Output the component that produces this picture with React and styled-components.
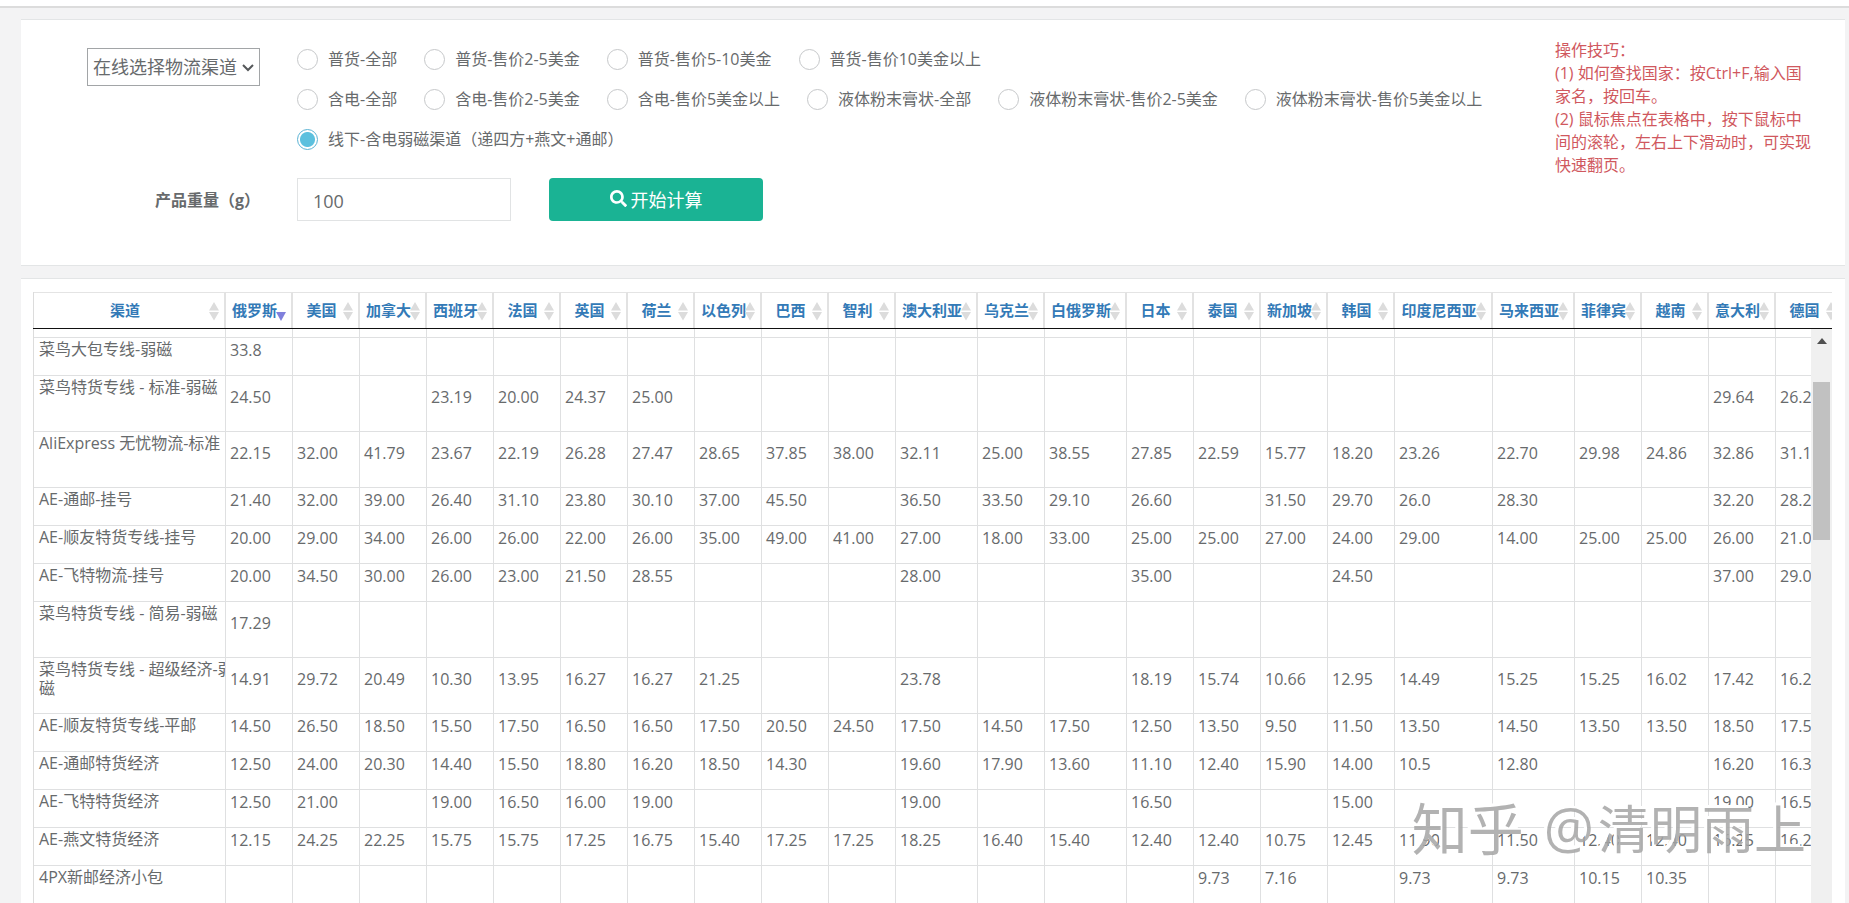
import React, { useState } from "react";
import styled, { createGlobalStyle } from "styled-components";
import { FaSearch } from "react-icons/fa";

const GlobalStyle = createGlobalStyle`
  *, *::before, *::after { box-sizing: border-box; }
  html, body { height: 100%; margin: 0; }
  body {
    overflow: hidden;
    background: #f3f3f4;
    color: #676a6c;
    font: 16px/24px "Open Sans", "Noto Sans CJK SC", sans-serif;
  }
  button, input, select { font-family: inherit; color: inherit; }
`;

const Page = styled.div`
  position: relative;
  height: 100vh;
  display: flex;
  flex-direction: column;
  overflow: hidden;
`;

const TopBar = styled.header`
  flex: none;
  height: 8px;
  background: #fff;
  border-bottom: 2px solid #dcdcdc;
`;

const Main = styled.main`
  flex: 1;
  min-height: 0;
  display: flex;
  flex-direction: column;
  gap: 12px;
  padding: 11px 4px 0 21px;
`;

const FilterPanel = styled.form`
  flex: none;
  display: grid;
  grid-template-columns: 239px minmax(0, 1fr) 258px;
  column-gap: 37px;
  row-gap: 19px;
  padding: 19px 32px 44px 0;
  background: #fff;
  border: solid #e3e5e6;
  border-width: 1px 0;
`;

const LabelCell = styled.div`
  display: flex;
  justify-content: flex-end;
  align-items: ${(p) => (p.$top ? "flex-start" : "center")};
  padding-top: ${(p) => (p.$top ? "9px" : "0")};
`;

const SelectBox = styled.div`
  position: relative;
  width: 173px;
  svg {
    position: absolute;
    right: 6px;
    top: 16px;
    pointer-events: none;
  }
`;

const Select = styled.select`
  appearance: none;
  width: 100%;
  height: 38px;
  padding: 0 22px 0 5px;
  border: 1px solid #a2a5a7;
  border-radius: 0;
  background: #fff;
  font-size: 18px;
`;

const RadioRows = styled.div`
  display: flex;
  flex-direction: column;
`;

const RadioRow = styled.div`
  display: flex;
  flex-wrap: wrap;
  column-gap: 27px;
`;

const RadioLabel = styled.label`
  display: flex;
  align-items: center;
  gap: 10px;
  height: 40px;
  white-space: nowrap;
`;

const Radio = styled.input`
  appearance: none;
  width: 21px;
  height: 21px;
  margin: 0;
  border: 1px solid #c6c8ca;
  border-radius: 50%;
  background: #fff;
  &:checked {
    border-color: #5bb3d4;
    background: radial-gradient(circle, #5bc0de 7px, #fff 8px);
  }
`;

const WeightLabel = styled.label`
  font-weight: 700;
`;

const WeightRow = styled.div`
  display: flex;
  gap: 38px;
`;

const WeightInput = styled.input`
  width: 214px;
  height: 43px;
  padding: 2px 15px 0;
  border: 1px solid #e1e3e4;
  background: #fff;
  font-size: 18px;
`;

const SubmitButton = styled.button`
  display: flex;
  align-items: center;
  justify-content: center;
  gap: 4px;
  width: 214px;
  height: 43px;
  padding: 0 6px 2px;
  border: 0;
  border-radius: 4px;
  background: #1ab394;
  color: #fff;
  font-size: 18px;
`;

const Tips = styled.div`
  grid-column: 3;
  grid-row: 1 / span 2;
  color: #d0585e;
  line-height: 23px;
  p { margin: 0; }
`;

const TablePanel = styled.section`
  flex: 1;
  min-height: 0;
  display: flex;
  flex-direction: column;
  padding: 13px 13px 0 12px;
  background: #fff;
  border-top: 1px solid #e3e5e6;
`;

const HeadClip = styled.div`
  flex: none;
  overflow: hidden;
  border-bottom: 1px solid #111;
`;

const BodyArea = styled.div`
  flex: 1;
  min-height: 0;
  display: flex;
`;

const BodyClip = styled.div`
  flex: 1;
  min-width: 0;
  overflow: hidden;
`;

const Table = styled.table`
  width: ${(p) => p.$width}px;
  table-layout: fixed;
  border-collapse: separate;
  border-spacing: 0;
  border-left: 1px solid #dcdcdc;
`;

const HeadCell = styled.th`
  height: 36px;
  padding: 0;
  border-top: 1px solid #e4e4e4;
  border-right: 2px solid #e2e2e2;
`;

const SortButton = styled.button`
  position: relative;
  display: block;
  width: 100%;
  height: 35px;
  padding: 0 14px 2px 6px;
  border: 0;
  background: transparent;
  color: #337ab7;
  font-size: 15px;
  font-weight: 700;
  line-height: 24px;
  white-space: nowrap;
  text-align: center;
  svg {
    position: absolute;
    right: 5px;
    top: 9px;
  }
`;

const Row = styled.tr`
  height: ${(p) => (p.$size === "tall" ? 56 : p.$size === "cut" ? 9 : 38)}px;
`;

const NameCell = styled.th`
  padding: 2px 0 0 5px;
  border: solid #dfe0e1;
  border-width: 0 1px 1px 0;
  font-weight: 400;
  line-height: 19px;
  text-align: left;
  vertical-align: top;
  overflow: hidden;
`;

const NameText = styled.div`
  width: 200px;
`;

const PriceCell = styled.td`
  padding: 0 0 ${(p) => (p.$cut ? 0 : 14)}px 4px;
  border: solid #dfe0e1;
  border-width: 0 1px 1px 0;
  line-height: 20px;
  vertical-align: middle;
  white-space: nowrap;
`;

const ScrollTrack = styled.div`
  flex: none;
  display: flex;
  flex-direction: column;
  align-items: center;
  width: 21px;
  padding-top: 9px;
  background: #f0f0f0;
`;

const ScrollThumb = styled.div`
  width: 17px;
  height: 158px;
  margin-top: 38px;
  background: #c1c1c1;
`;

const Watermark = styled.div`
  position: absolute;
  right: 43px;
  bottom: 38px;
  display: flex;
  align-items: center;
  gap: 20px;
  color: rgba(164, 164, 164, 0.85);
  font-size: 52px;
  line-height: 72px;
  text-shadow: -3px -3px 0 #fff;
  white-space: nowrap;
  pointer-events: none;
`;

const Brand = styled.span`
  font-size: 56px;
`;

const AtSign = styled.span`
  margin-right: 4px;
  font-size: 56px;
`;

const OPTION_ROWS = [
  ["普货-全部", "普货-售价2-5美金", "普货-售价5-10美金", "普货-售价10美金以上"],
  [
    "含电-全部",
    "含电-售价2-5美金",
    "含电-售价5美金以上",
    "液体粉末膏状-全部",
    "液体粉末膏状-售价2-5美金",
    "液体粉末膏状-售价5美金以上",
  ],
  ["线下-含电弱磁渠道（递四方+燕文+通邮）"],
];

const COUNTRIES = [
  "俄罗斯", "美国", "加拿大", "西班牙", "法国", "英国", "荷兰", "以色列",
  "巴西", "智利", "澳大利亚", "乌克兰", "白俄罗斯", "日本", "泰国", "新加坡",
  "韩国", "印度尼西亚", "马来西亚", "菲律宾", "越南", "意大利", "德国",
];

// Prices follow the order of COUNTRIES; "-" stands for a route that is not offered.
const ROWS = [
  { name: "", size: "cut", prices: "" },
  { name: "菜鸟大包专线-弱磁", prices: "33.8" },
  { name: "菜鸟特货专线 - 标准-弱磁", size: "tall", prices: "24.50 - - 23.19 20.00 24.37 25.00 - - - - - - - - - - - - - - 29.64 26.20" },
  { name: "AliExpress 无忧物流-标准", size: "tall", prices: "22.15 32.00 41.79 23.67 22.19 26.28 27.47 28.65 37.85 38.00 32.11 25.00 38.55 27.85 22.59 15.77 18.20 23.26 22.70 29.98 24.86 32.86 31.10" },
  { name: "AE-通邮-挂号", prices: "21.40 32.00 39.00 26.40 31.10 23.80 30.10 37.00 45.50 - 36.50 33.50 29.10 26.60 - 31.50 29.70 26.0 28.30 - - 32.20 28.20" },
  { name: "AE-顺友特货专线-挂号", prices: "20.00 29.00 34.00 26.00 26.00 22.00 26.00 35.00 49.00 41.00 27.00 18.00 33.00 25.00 25.00 27.00 24.00 29.00 14.00 25.00 25.00 26.00 21.00" },
  { name: "AE-飞特物流-挂号", prices: "20.00 34.50 30.00 26.00 23.00 21.50 28.55 - - - 28.00 - - 35.00 - - 24.50 - - - - 37.00 29.00" },
  { name: "菜鸟特货专线 - 简易-弱磁", size: "tall", prices: "17.29" },
  { name: "菜鸟特货专线 - 超级经济-弱磁", size: "tall", prices: "14.91 29.72 20.49 10.30 13.95 16.27 16.27 21.25 - - 23.78 - - 18.19 15.74 10.66 12.95 14.49 15.25 15.25 16.02 17.42 16.20" },
  { name: "AE-顺友特货专线-平邮", prices: "14.50 26.50 18.50 15.50 17.50 16.50 16.50 17.50 20.50 24.50 17.50 14.50 17.50 12.50 13.50 9.50 11.50 13.50 14.50 13.50 13.50 18.50 17.50" },
  { name: "AE-通邮特货经济", prices: "12.50 24.00 20.30 14.40 15.50 18.80 16.20 18.50 14.30 - 19.60 17.90 13.60 11.10 12.40 15.90 14.00 10.5 12.80 - - 16.20 16.30" },
  { name: "AE-飞特特货经济", prices: "12.50 21.00 - 19.00 16.50 16.00 19.00 - - - 19.00 - - 16.50 - - 15.00 - - - - 19.00 16.50" },
  { name: "AE-燕文特货经济", prices: "12.15 24.25 22.25 15.75 15.75 17.25 16.75 15.40 17.25 17.25 18.25 16.40 15.40 12.40 12.40 10.75 12.45 11.90 11.50 12.40 12.40 16.25 16.20" },
  { name: "4PX新邮经济小包", prices: "- - - - - - - - - - - - - - 9.73 7.16 - 9.73 9.73 10.15 10.35" },
];

const NAME_WIDTH = 192;
const columnWidth = (country) => ({ 4: 82, 5: 98 })[country.length] || 67;
const TABLE_WIDTH = COUNTRIES.reduce((sum, c) => sum + columnWidth(c), NAME_WIDTH + 1);

function Columns() {
  return (
    <colgroup>
      <col width={NAME_WIDTH} />
      {COUNTRIES.map((c) => (
        <col key={c} width={columnWidth(c)} />
      ))}
    </colgroup>
  );
}

function SortIcon({ sorted }) {
  return (
    <svg width="10" height="19" viewBox="0 0 10 19" aria-hidden="true">
      {sorted ? (
        <path d="M0 10h10L5 19z" fill="#8080dc" />
      ) : (
        <path d="M5 0l5 8.500H0zM0 10h10L5 18.500z" fill="#dcdcdc" />
      )}
    </svg>
  );
}

function HeaderCell({ children, sorted }) {
  return (
    <HeadCell scope="col" aria-sort={sorted ? "descending" : undefined}>
      <SortButton type="button">
        {children}
        <SortIcon sorted={sorted} />
      </SortButton>
    </HeadCell>
  );
}

function PriceRow({ name, size, prices }) {
  const values = prices.split(" ");
  return (
    <Row $size={size}>
      <NameCell scope="row">{name && <NameText>{name}</NameText>}</NameCell>
      {COUNTRIES.map((c, i) => (
        <PriceCell key={c} $cut={size === "cut"}>
          {values[i] && values[i] !== "-" ? values[i] : null}
        </PriceCell>
      ))}
    </Row>
  );
}

export default function App() {
  const [channel, setChannel] = useState(OPTION_ROWS[2][0]);
  const [weight, setWeight] = useState("100");

  return (
    <Page lang="zh-CN">
      <GlobalStyle />
      <TopBar />
      <Main>
        <FilterPanel onSubmit={(e) => e.preventDefault()}>
          <LabelCell $top>
            <SelectBox>
              <Select aria-label="物流渠道">
                <option>在线选择物流渠道</option>
              </Select>
              <svg width="12" height="8" viewBox="0 0 12 8" fill="none" aria-hidden="true">
                <path d="M1 1l5 5 5-5" stroke="#55585a" strokeWidth="2" />
              </svg>
            </SelectBox>
          </LabelCell>
          <RadioRows role="radiogroup">
            {OPTION_ROWS.map((row) => (
              <RadioRow key={row[0]}>
                {row.map((option) => (
                  <RadioLabel key={option}>
                    <Radio
                      type="radio"
                      name="channel"
                      checked={channel === option}
                      onChange={() => setChannel(option)}
                    />
                    {option}
                  </RadioLabel>
                ))}
              </RadioRow>
            ))}
          </RadioRows>
          <Tips>
            <p>操作技巧：</p>
            <p>(1) 如何查找国家：按Ctrl+F,输入国家名，按回车。</p>
            <p>(2) 鼠标焦点在表格中，按下鼠标中间的滚轮，左右上下滑动时，可实现快速翻页。</p>
          </Tips>
          <LabelCell>
            <WeightLabel htmlFor="weight">产品重量（g）</WeightLabel>
          </LabelCell>
          <WeightRow>
            <WeightInput id="weight" value={weight} onChange={(e) => setWeight(e.target.value)} />
            <SubmitButton type="submit">
              <FaSearch size={17} aria-hidden="true" />
              开始计算
            </SubmitButton>
          </WeightRow>
        </FilterPanel>
        <TablePanel>
          <HeadClip>
            <Table $width={TABLE_WIDTH}>
              <Columns />
              <thead>
                <tr>
                  <HeaderCell>渠道</HeaderCell>
                  {COUNTRIES.map((c, i) => (
                    <HeaderCell key={c} sorted={i === 0}>{c}</HeaderCell>
                  ))}
                </tr>
              </thead>
            </Table>
          </HeadClip>
          <BodyArea>
            <BodyClip>
              <Table $width={TABLE_WIDTH}>
                <Columns />
                <tbody>
                  {ROWS.map((row) => (
                    <PriceRow key={row.name} {...row} />
                  ))}
                </tbody>
              </Table>
            </BodyClip>
            <ScrollTrack aria-hidden="true">
              <svg width="10" height="6" viewBox="0 0 10 6">
                <path d="M5 0l5 6H0z" fill="#505050" />
              </svg>
              <ScrollThumb />
            </ScrollTrack>
          </BodyArea>
        </TablePanel>
      </Main>
      <Watermark>
        <Brand>知乎</Brand>
        <span><AtSign>@</AtSign>清明雨上</span>
      </Watermark>
    </Page>
  );
}
